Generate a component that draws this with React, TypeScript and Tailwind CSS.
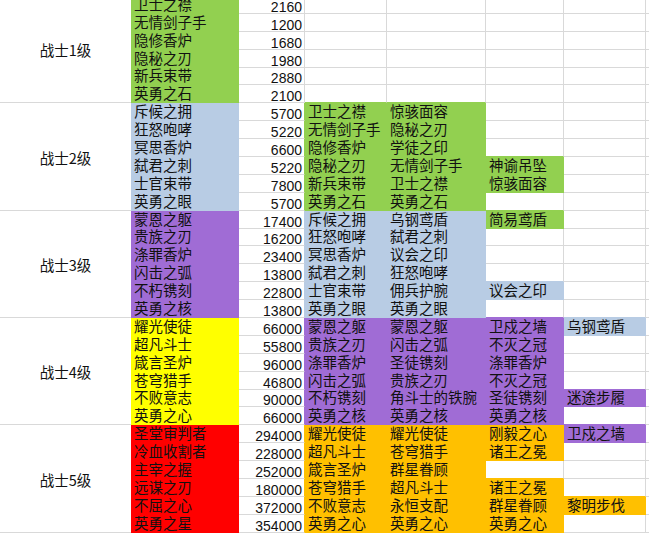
import React from 'react';

// fill codes per column B..G ('.' = no fill)
const FILLS: Record<string, string> = {
  g: '#92d050',
  b: '#b8cce4',
  p: '#a06cd5',
  y: '#ffff00',
  r: '#ff0000',
  o: '#ffc000',
};

const GRID = '#d9d9d9';

interface Row {
  cells: string[];
  fill: string;
}

interface Group {
  label: string;
  rows: Row[];
}

const groups: Group[] = [
  {
    label: '战士1级',
    rows: [
      { cells: ['卫士之襟', '2160', '', '', '', ''], fill: 'g.....' },
      { cells: ['无情剑子手', '1200', '', '', '', ''], fill: 'g.....' },
      { cells: ['隐修香炉', '1680', '', '', '', ''], fill: 'g.....' },
      { cells: ['隐秘之刃', '1980', '', '', '', ''], fill: 'g.....' },
      { cells: ['新兵束带', '2880', '', '', '', ''], fill: 'g.....' },
      { cells: ['英勇之石', '2100', '', '', '', ''], fill: 'g.....' },
    ],
  },
  {
    label: '战士2级',
    rows: [
      { cells: ['斥候之拥', '5700', '卫士之襟', '惊骇面容', '', ''], fill: 'b.gg..' },
      { cells: ['狂怒咆哮', '5220', '无情剑子手', '隐秘之刃', '', ''], fill: 'b.gg..' },
      { cells: ['冥思香炉', '6600', '隐修香炉', '学徒之印', '', ''], fill: 'b.gg..' },
      { cells: ['弑君之刺', '5220', '隐秘之刃', '无情剑子手', '神谕吊坠', ''], fill: 'b.ggg.' },
      { cells: ['士官束带', '7800', '新兵束带', '卫士之襟', '惊骇面容', ''], fill: 'b.ggg.' },
      { cells: ['英勇之眼', '5700', '英勇之石', '英勇之石', '', ''], fill: 'b.gg..' },
    ],
  },
  {
    label: '战士3级',
    rows: [
      { cells: ['蒙恩之躯', '17400', '斥候之拥', '乌钢鸢盾', '简易鸢盾', ''], fill: 'p.bbg.' },
      { cells: ['贵族之刃', '16200', '狂怒咆哮', '弑君之刺', '', ''], fill: 'p.bb..' },
      { cells: ['涤罪香炉', '23400', '冥思香炉', '议会之印', '', ''], fill: 'p.bb..' },
      { cells: ['闪击之弧', '13800', '弑君之刺', '狂怒咆哮', '', ''], fill: 'p.bb..' },
      { cells: ['不朽镌刻', '22800', '士官束带', '佣兵护腕', '议会之印', ''], fill: 'p.bbb.' },
      { cells: ['英勇之核', '13800', '英勇之眼', '英勇之眼', '', ''], fill: 'p.bb..' },
    ],
  },
  {
    label: '战士4级',
    rows: [
      { cells: ['耀光使徒', '66000', '蒙恩之躯', '蒙恩之躯', '卫戍之墙', '乌钢鸢盾'], fill: 'y.pppb' },
      { cells: ['超凡斗士', '55800', '贵族之刃', '闪击之弧', '不灭之冠', ''], fill: 'y.ppp.' },
      { cells: ['箴言圣炉', '96000', '涤罪香炉', '圣徒镌刻', '涤罪香炉', ''], fill: 'y.ppp.' },
      { cells: ['苍穹猎手', '46800', '闪击之弧', '贵族之刃', '不灭之冠', ''], fill: 'y.ppp.' },
      { cells: ['不败意志', '90000', '不朽镌刻', '角斗士的铁腕', '圣徒镌刻', '迷途步履'], fill: 'y.pppp' },
      { cells: ['英勇之心', '66000', '英勇之核', '英勇之核', '英勇之核', ''], fill: 'y.ppp.' },
    ],
  },
  {
    label: '战士5级',
    rows: [
      { cells: ['圣堂审判者', '294000', '耀光使徒', '耀光使徒', '刚毅之心', '卫戍之墙'], fill: 'r.ooop' },
      { cells: ['冷血收割者', '228000', '超凡斗士', '苍穹猎手', '诸王之冕', ''], fill: 'r.ooo.' },
      { cells: ['主宰之握', '252000', '箴言圣炉', '群星眷顾', '', ''], fill: 'r.oo..' },
      { cells: ['远谋之刃', '180000', '苍穹猎手', '超凡斗士', '诸王之冕', ''], fill: 'r.ooo.' },
      { cells: ['不屈之心', '372000', '不败意志', '永恒支配', '群星眷顾', '黎明步伐'], fill: 'r.oooo' },
      { cells: ['英勇之星', '354000', '英勇之心', '英勇之心', '英勇之心', ''], fill: 'r.ooo.' },
    ],
  },
];

const allRows = groups.flatMap((g) => g.rows);

function fillAt(rowIdx: number, col: number): string | null {
  const row = allRows[rowIdx];
  if (!row || col < 0 || col >= 6) return null;
  const c = row.fill[col];
  return c === '.' ? null : FILLS[c];
}

const cjk = { fontFamily: '"Noto Sans CJK SC", "Noto Sans", sans-serif' };
const num = { fontFamily: '"Liberation Sans", Arial, sans-serif' };

function Cell({ rowIdx, col, text }: { rowIdx: number; col: number; text: string }) {
  const own = fillAt(rowIdx, col);
  // Excel paints fills over gridlines, so a shared edge takes the neighbour's fill
  const right = own ?? fillAt(rowIdx, col + 1) ?? GRID;
  const bottom = own ?? fillAt(rowIdx + 1, col) ?? GRID;
  const isNum = col === 1;
  return (
    <div
      className={`flex items-end border-r border-b overflow-hidden whitespace-nowrap ${
        isNum
          ? 'justify-end pr-[2px] text-[14px] leading-[11px]'
          : 'pl-[3px] pb-[1px] text-[14.5px] leading-[16px]'
      }`}
      style={{ backgroundColor: own ?? '#ffffff', borderRightColor: right, borderBottomColor: bottom, ...(isNum ? num : cjk) }}
    >
      {text}
    </div>
  );
}

export default function App() {
  let rowIdx = 0;
  return (
    <div className="w-[649px] h-[537px] overflow-hidden bg-white text-[#111]">
      <div className="-mt-1 grid grid-cols-[131px_108px_66px_82px_99px_78px_82px_1fr] auto-rows-[17.9px]">
        {groups.map((g) => {
          const start = rowIdx;
          rowIdx += g.rows.length;
          return (
            <React.Fragment key={g.label}>
              <div
                className="row-span-6 flex items-center justify-center border-b border-[#d9d9d9] text-[14.5px] leading-[16px] pt-[2px]"
                style={cjk}
              >
                {g.label}
              </div>
              {g.rows.map((r, i) => (
                <React.Fragment key={i}>
                  {r.cells.map((t, c) => (
                    <Cell key={c} rowIdx={start + i} col={c} text={t} />
                  ))}
                  <div className="border-b border-[#d9d9d9]" />
                </React.Fragment>
              ))}
            </React.Fragment>
          );
        })}
      </div>
    </div>
  );
}
